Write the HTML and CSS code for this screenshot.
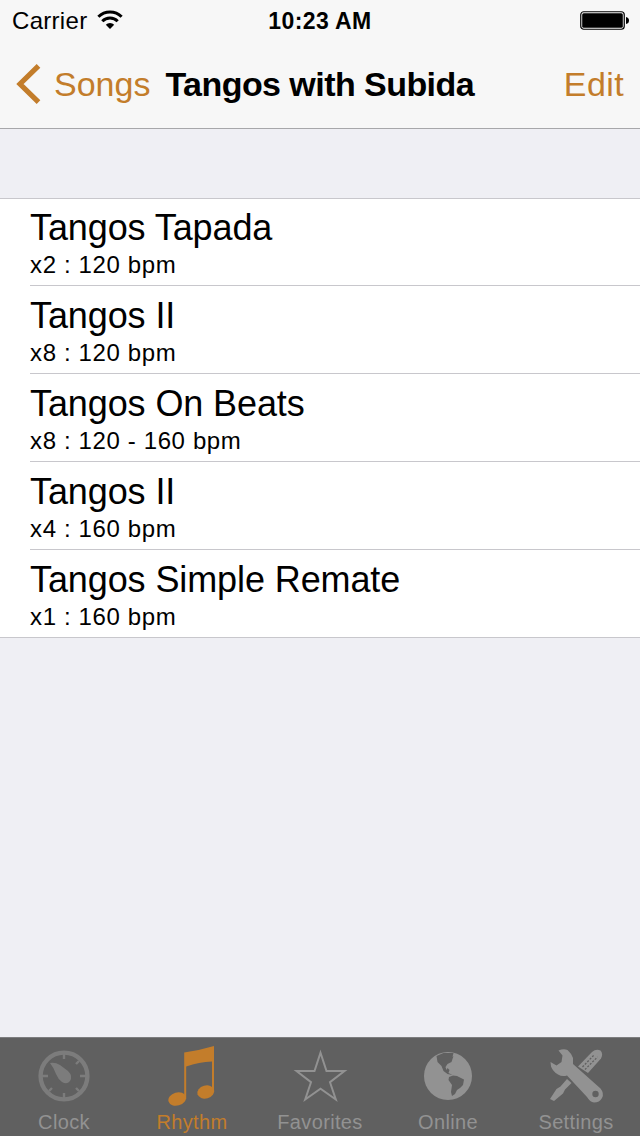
FILE: index.html
```html
<!DOCTYPE html>
<html lang="en">
<head>
  <meta charset="UTF-8">
  <title>Tangos with Subida</title>
  <link rel="stylesheet" href="styles.css">
</head>
<body>

  <header class="top">
    <div class="status-bar">
      <div class="carrier">
        <span>Carrier</span>
        <svg class="wifi" width="26" height="20" viewBox="0 0 26 20">
          <g fill="none" stroke="#000" stroke-width="3">
            <path d="M1.4 6.800a16.200 16.200 0 0 1 23.200 0"/>
            <path d="M5.300 11.300a10.800 10.800 0 0 1 15.400 0"/>
          </g>
          <path d="M8.800 14.700a5.800 5.800 0 0 1 8.400 0L13 19z"/>
        </svg>
      </div>
      <span class="clock">10:23 AM</span>
      <svg class="battery" width="50" height="20" viewBox="0 0 50 20">
        <rect x=".75" y=".75" width="43.500" height="17.500" rx="3" fill="none" stroke="#000" stroke-width="1.200"/>
        <rect x="2.200" y="2.200" width="40.600" height="14.600" rx="1.500"/>
        <path d="M46 6q3 .5 3 3.500t-3 3.500z"/>
      </svg>
    </div>
    <nav class="nav-bar">
      <a class="back">
        <svg width="26" height="42" viewBox="0 0 26 42">
          <path d="M22.500 2.800L4 21l18.500 18.200" fill="none" stroke="#c37d2b" stroke-width="5.200"/>
        </svg>
        <span class="back-label">Songs</span>
      </a>
      <h1>Tangos with Subida</h1>
      <a class="edit">Edit</a>
    </nav>
  </header>

  <main>
    <ul class="song-list">
      <li>
        <div class="name">Tangos Tapada</div>
        <div class="detail">x2 : 120 bpm</div>
      </li>
      <li>
        <div class="name">Tangos II</div>
        <div class="detail">x8 : 120 bpm</div>
      </li>
      <li>
        <div class="name">Tangos On Beats</div>
        <div class="detail">x8 : 120 - 160 bpm</div>
      </li>
      <li>
        <div class="name">Tangos II</div>
        <div class="detail">x4 : 160 bpm</div>
      </li>
      <li>
        <div class="name">Tangos Simple Remate</div>
        <div class="detail">x1 : 160 bpm</div>
      </li>
    </ul>
  </main>

  <footer class="tab-bar">
    <a class="tab">
      <svg width="60" height="60" viewBox="0 0 60 60" class="dim">
        <circle cx="30" cy="30" r="23.400" fill="none" stroke="currentColor" stroke-width="4.400"/>
        <path d="M30 8v5M30 47v5M8 30h6M46 30h6M42 18l3-3M18 42l-3 3M42 42l3 3" stroke="currentColor" stroke-width="2.400"/>
        <path d="M16 17q5-1 10 2l8 6q5 5 2 10-3 4-8 1-4-3-6-8-2-6-6-11z" fill="currentColor"/>
      </svg>
      <span>Clock</span>
    </a>
    <a class="tab active">
      <svg width="60" height="60" viewBox="0 0 60 60" fill="currentColor">
        <path d="M22.200 6.500Q37 4.500 52 0v46h-2V15.500Q37 16 24.200 20.500V53h-2z"/>
        <ellipse cx="15.200" cy="53" rx="9" ry="6.500" transform="rotate(-16 15.200 53)"/>
        <ellipse cx="43.800" cy="46" rx="8.600" ry="6.500" transform="rotate(-16 43.800 46)"/>
      </svg>
      <span>Rhythm</span>
    </a>
    <a class="tab">
      <svg width="60" height="60" viewBox="0 0 60 60">
        <path d="M30.500 6.800l6 18.200h18L40 36.200l5.800 17.300-15.300-10.800-15.300 10.800L21 36.200 6.500 25h18z" fill="none" stroke="currentColor" stroke-width="2"/>
      </svg>
      <span>Favorites</span>
    </a>
    <a class="tab">
      <svg width="60" height="60" viewBox="0 0 60 60">
        <circle cx="30" cy="30" r="24" fill="currentColor"/>
        <path d="M18.500 10l7-3h10l-1 4 1-1-2 6-4 2-2 3 1 3 1-2 2 2-1 3 4 2-5-1-4-3-2-5-4-4z" fill="#606060"/>
        <path d="M31 31l4-1.500 4 .5 7 3.500-1 5.500-3 3-3 2-2 4-3 2-1-4 1-7-3.500-5z" fill="#606060"/>
      </svg>
      <span>Online</span>
    </a>
    <a class="tab">
      <svg width="60" height="60" viewBox="0 0 60 60">
        <path d="M32 20.500L46 6q4-3.500 8.500-1.500 3 3.500.5 8L42 27z" fill="currentColor"/>
        <path d="M36.500 21L48 9M39 23.500L51.500 11" stroke="#606060" stroke-width="1.300" stroke-dasharray="2 1.500"/>
        <path d="M21 33l4.500 4-6.500 6.500-2 4L8 55l-4-2 6.500-10 4-2.500z" fill="currentColor"/>
        <path d="M12.500 4.500q5-2 9-.5 3.500 3 5.500 8v6l27.500 24.500q4 5 1.500 9.500t-8 4.500q-4-.5-7-5.500L21 29.500q-5 1.500-9-1-5-3-7-8l-.5-4.500 6 3.500 5-3.500 1-6.500z" fill="currentColor"/>
        <circle cx="49.500" cy="48" r="3.200" fill="#606060"/>
      </svg>
      <span>Settings</span>
    </a>
  </footer>

</body>
</html>
```
FILE: styles.css
```css
* {
  box-sizing: border-box;
}

body {
  margin: 0;
  height: 1136px;
  display: flex;
  flex-direction: column;
  background: #efeff4;
  color: #000;
  font-family: "Liberation Sans", Arial, sans-serif;
  overflow: hidden;
}

.top {
  height: 129px;
  background: #f7f7f7;
  border-bottom: 1px solid #a7a7aa;
}

.status-bar {
  height: 40px;
  padding: 2px 10px 0 12px;
  display: grid;
  grid-template-columns: 1fr auto 1fr;
  align-items: center;
  font-size: 24px;
}

.carrier {
  display: flex;
  align-items: center;
  gap: 10px;
  letter-spacing: 0.3px;
}

.wifi {
  margin-bottom: 2px;
}

.clock {
  font-size: 23px;
  font-weight: bold;
  letter-spacing: 0.4px;
  margin-right: 2px;
}

.battery {
  justify-self: end;
}

.nav-bar {
  height: 88px;
  padding: 0 16px;
  display: flex;
  align-items: center;
  font-size: 34px;
}

.back {
  display: flex;
  align-items: center;
  color: #c37d2b;
}

.back-label {
  margin-left: 12px;
}

h1 {
  margin: 0 0 0 15px;
  font-size: 34px;
  font-weight: bold;
  letter-spacing: -0.55px;
  white-space: nowrap;
}

.edit {
  margin-left: auto;
  color: #c37d2b;
  letter-spacing: 0.4px;
}

main {
  flex: 1;
  padding-top: 69px;
}

.song-list {
  margin: 0;
  padding: 0 0 0 30px;
  list-style: none;
  background: #fff;
  border-top: 1px solid #c8c7cc;
  border-bottom: 1px solid #c8c7cc;
}

.song-list li {
  height: 88px;
  padding-top: 9px;
  border-bottom: 1px solid #c8c7cc;
}

.song-list li:first-child {
  height: 87px;
  padding-top: 8px;
}

.song-list li:last-child {
  height: 87px;
  border-bottom: none;
}

.name {
  font-size: 36px;
  line-height: 42px;
  letter-spacing: -0.1px;
}

.detail {
  font-size: 24px;
  line-height: 32px;
  letter-spacing: 0.63px;
}

.tab-bar {
  height: 99px;
  display: grid;
  grid-template-columns: repeat(5, 1fr);
  background: #606060;
  border-top: 1px solid #7d7d7f;
}

.tab {
  padding-top: 8px;
  display: flex;
  flex-direction: column;
  align-items: center;
  color: #929292;
  font-size: 20px;
  line-height: 32px;
  letter-spacing: 0.35px;
}

.tab.active {
  color: #c37d2b;
}

.dim {
  color: #7c7c7c;
}
```
